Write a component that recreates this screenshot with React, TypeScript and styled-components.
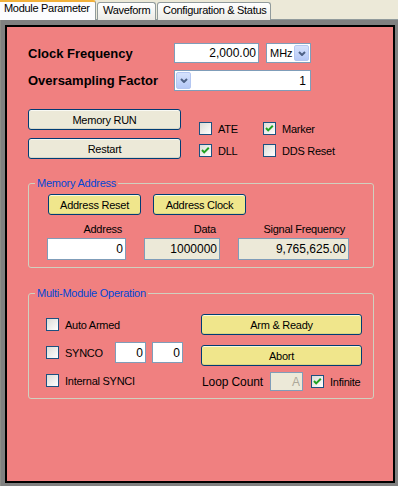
import styled, { createGlobalStyle, css } from 'styled-components';

const GlobalStyle = createGlobalStyle`
  html, body {
    margin: 0;
    padding: 0;
  }
  body {
    font-family: "Liberation Sans", Arial, sans-serif;
    font-size: 11px;
    color: #000;
    background: #ECE9D8;
  }
`;

const Window = styled.div`
  width: 398px;
  height: 486px;
  display: flex;
  flex-direction: column;
  overflow: hidden;
`;

const TabStrip = styled.div`
  display: flex;
  align-items: flex-end;
  gap: 1px;
  height: 20px;
  background: #ECE9D8;
  box-shadow: inset 0 -1px #919B9C;
`;

const Tab = styled.div<{ $active?: boolean; $w: number }>`
  box-sizing: border-box;
  width: ${(p) => p.$w}px;
  height: 18px;
  padding: 1px 0 0 5px;
  line-height: 13px;
  letter-spacing: -0.3px;
  white-space: nowrap;
  border: 1px solid #919B9C;
  border-bottom: none;
  border-radius: 3px 3px 0 0;
  background: linear-gradient(#ffffff, #ECEBE6);

  ${(p) =>
    p.$active &&
    css`
      height: 20px;
      padding: 0 0 0 4px;
      border-left: none;
      border-top: 2px solid #F2B13A;
      border-radius: 0 3px 0 0;
      background: #FCFCFE;
    `}
`;

const TabPage = styled.div`
  flex: 1;
  display: flex;
  background: #808080;
  border-left: 1px solid #8E8E88;
  padding: 5px 3px 3px 4px;
`;

const Panel = styled.section`
  flex: 1;
  border: 2px solid #000;
  background: #F08080;
  padding: 16px 0 0 21px;
`;

const FieldRow = styled.div<{ $mt?: number }>`
  display: flex;
  align-items: center;
  gap: 7px;
  margin-top: ${(p) => p.$mt ?? 0}px;
`;

const FieldLabel = styled.label`
  width: 139px;
  font-size: 13px;
  font-weight: bold;
  white-space: nowrap;
`;

const TextBox = styled.input<{ $w: number; $h?: number; $ro?: boolean; $dim?: boolean }>`
  box-sizing: border-box;
  width: ${(p) => p.$w}px;
  height: ${(p) => p.$h ?? 21}px;
  margin: 0;
  padding: 0 2px;
  border: 1px solid #7F9DB9;
  background: ${(p) => (p.$ro ? '#ECE9D8' : '#ffffff')};
  color: ${(p) => (p.$dim ? '#ACA899' : '#000')};
  font-family: inherit;
  font-size: 12px;
  text-align: right;
  outline: none;
`;

const Combo = styled.div<{ $w: number; $h: number }>`
  box-sizing: border-box;
  width: ${(p) => p.$w}px;
  height: ${(p) => p.$h}px;
  display: flex;
  padding: 1px;
  border: 1px solid #7F9DB9;
  background: #ffffff;
`;

const ComboText = styled.span<{ $right?: boolean }>`
  flex: 1;
  display: flex;
  align-items: center;
  justify-content: ${(p) => (p.$right ? 'flex-end' : 'flex-start')};
  padding: ${(p) => (p.$right ? '0 3px 0 0' : '0 0 0 2px')};
  font-size: ${(p) => (p.$right ? 12 : 11)}px;
`;

const DropButton = styled.span`
  box-sizing: border-box;
  width: 15px;
  display: flex;
  align-items: center;
  justify-content: center;
  border: 1px solid #B4C7F2;
  border-radius: 2px;
  background: linear-gradient(#D6E2FD, #B5C9F7);
`;

const XpButton = styled.button<{ $w: number; $yellow?: boolean }>`
  box-sizing: border-box;
  width: ${(p) => p.$w}px;
  height: 21px;
  margin: 0;
  padding: 0;
  border: 1px solid #003C74;
  border-radius: 3px;
  background: ${(p) => (p.$yellow ? '#F0E68C' : '#ECE9D8')};
  box-shadow: inset 0 1px rgba(255, 255, 255, 0.7), inset 0 -1px rgba(0, 0, 0, 0.08);
  font-family: inherit;
  font-size: 11px;
  letter-spacing: -0.25px;
  color: #000;
`;

const ControlArea = styled.div`
  display: flex;
  margin-top: 18px;
`;

const ButtonStack = styled.div`
  display: flex;
  flex-direction: column;
  gap: 8px;
`;

const CheckGrid = styled.div`
  display: grid;
  grid-template-columns: 64px auto;
  row-gap: 9px;
  align-content: start;
  margin: 13px 0 0 18px;
`;

const CheckItem = styled.label<{ $w?: number; $ml?: number }>`
  display: flex;
  align-items: center;
  gap: 6px;
  height: 13px;
  ${(p) => p.$w && `width: ${p.$w}px;`}
  margin-left: ${(p) => p.$ml ?? 0}px;
  white-space: nowrap;
  letter-spacing: -0.25px;
`;

const Box = styled.span`
  box-sizing: border-box;
  flex: none;
  width: 13px;
  height: 13px;
  display: flex;
  align-items: center;
  justify-content: center;
  border: 1px solid #1C5180;
  background: linear-gradient(135deg, #DCDCD7, #ffffff);
`;

const Group = styled.fieldset<{ $mt: number }>`
  box-sizing: border-box;
  width: 346px;
  min-width: 0;
  margin: ${(p) => p.$mt}px 0 0;
  padding: 0;
  border: 1px solid #D0D0BF;
  border-radius: 3px;
`;

const Legend = styled.legend`
  margin-left: 6px;
  padding: 0 2px;
  line-height: 14px;
  color: #0046D5;
  letter-spacing: -0.25px;
`;

const GroupButtons = styled.div`
  display: flex;
  gap: 12px;
  padding: 4px 0 0 19px;
`;

const FieldGrid = styled.div`
  display: grid;
  grid-template-columns: 79px 76px 111px;
  column-gap: 18px;
  row-gap: 2px;
  padding: 7px 0 7px 18px;
`;

const ColLabel = styled.div`
  padding-right: 4px;
  line-height: 14px;
  text-align: right;
  letter-spacing: -0.25px;
`;

const OpsBody = styled.div`
  display: flex;
  padding: 14px 0 7px 17px;
`;

const LeftCol = styled.div`
  width: 155px;
  display: flex;
  flex-direction: column;
  gap: 7px;
`;

const OpRow = styled.div`
  display: flex;
  align-items: center;
  gap: 6px;
  height: 21px;
`;

const RightCol = styled.div`
  width: 161px;
  display: flex;
  flex-direction: column;
  gap: 10px;
`;

const LoopRow = styled.div`
  display: flex;
  align-items: center;
  height: 19px;
  margin-top: -4px;
`;

const LoopLabel = styled.span`
  width: 68px;
  padding-left: 1px;
  font-size: 12px;
  letter-spacing: -0.1px;
`;

const Chevron = () => (
  <svg width="8" height="5" viewBox="0 0 8 5">
    <path d="M1 1 L4 4 L7 1" fill="none" stroke="#4D6185" strokeWidth="2" />
  </svg>
);

const Tick = () => (
  <svg width="11" height="11" viewBox="0 0 11 11">
    <path d="M2 5 L4.2 7.4 L8.8 2.8" fill="none" stroke="#21A121" strokeWidth="2" />
  </svg>
);

function Check({ label, checked, w, ml }: { label: string; checked?: boolean; w?: number; ml?: number }) {
  return (
    <CheckItem $w={w} $ml={ml}>
      <Box>{checked && <Tick />}</Box>
      {label}
    </CheckItem>
  );
}

export default function App() {
  return (
    <>
      <GlobalStyle />
      <Window>
        <TabStrip>
          <Tab $active $w={96}>Module Parameter</Tab>
          <Tab $w={59}>Waveform</Tab>
          <Tab $w={114}>Configuration &amp; Status</Tab>
        </TabStrip>
        <TabPage>
          <Panel>
            <FieldRow>
              <FieldLabel>Clock Frequency</FieldLabel>
              <TextBox $w={85} $h={20} readOnly value="2,000.00" />
              <Combo $w={45} $h={20}>
                <ComboText>MHz</ComboText>
                <DropButton>
                  <Chevron />
                </DropButton>
              </Combo>
            </FieldRow>
            <FieldRow $mt={7}>
              <FieldLabel>Oversampling Factor</FieldLabel>
              <Combo $w={137} $h={21}>
                <DropButton>
                  <Chevron />
                </DropButton>
                <ComboText $right>1</ComboText>
              </Combo>
            </FieldRow>

            <ControlArea>
              <ButtonStack>
                <XpButton $w={153}>Memory RUN</XpButton>
                <XpButton $w={153}>Restart</XpButton>
              </ButtonStack>
              <CheckGrid>
                <Check label="ATE" />
                <Check label="Marker" checked />
                <Check label="DLL" checked />
                <Check label="DDS Reset" />
              </CheckGrid>
            </ControlArea>

            <Group $mt={17}>
              <Legend>Memory Address</Legend>
              <GroupButtons>
                <XpButton $w={93} $yellow>Address Reset</XpButton>
                <XpButton $w={93} $yellow>Address Clock</XpButton>
              </GroupButtons>
              <FieldGrid>
                <ColLabel>Address</ColLabel>
                <ColLabel>Data</ColLabel>
                <ColLabel>Signal Frequency</ColLabel>
                <TextBox $w={79} $h={22} readOnly value="0" />
                <TextBox $w={76} $h={22} $ro readOnly value="1000000" />
                <TextBox $w={111} $h={22} $ro readOnly value="9,765,625.00" />
              </FieldGrid>
            </Group>

            <Group $mt={18}>
              <Legend>Multi-Module Operation</Legend>
              <OpsBody>
                <LeftCol>
                  <OpRow>
                    <Check label="Auto Armed" />
                  </OpRow>
                  <OpRow>
                    <Check label="SYNCO" w={63} />
                    <TextBox $w={31} readOnly value="0" />
                    <TextBox $w={31} readOnly value="0" />
                  </OpRow>
                  <OpRow>
                    <Check label="Internal SYNCI" />
                  </OpRow>
                </LeftCol>
                <RightCol>
                  <XpButton $w={161} $yellow>Arm &amp; Ready</XpButton>
                  <XpButton $w={161} $yellow>Abort</XpButton>
                  <LoopRow>
                    <LoopLabel>Loop Count</LoopLabel>
                    <TextBox $w={33} $h={19} $ro $dim readOnly value="A" />
                    <Check label="Infinite" checked ml={8} />
                  </LoopRow>
                </RightCol>
              </OpsBody>
            </Group>
          </Panel>
        </TabPage>
      </Window>
    </>
  );
}
